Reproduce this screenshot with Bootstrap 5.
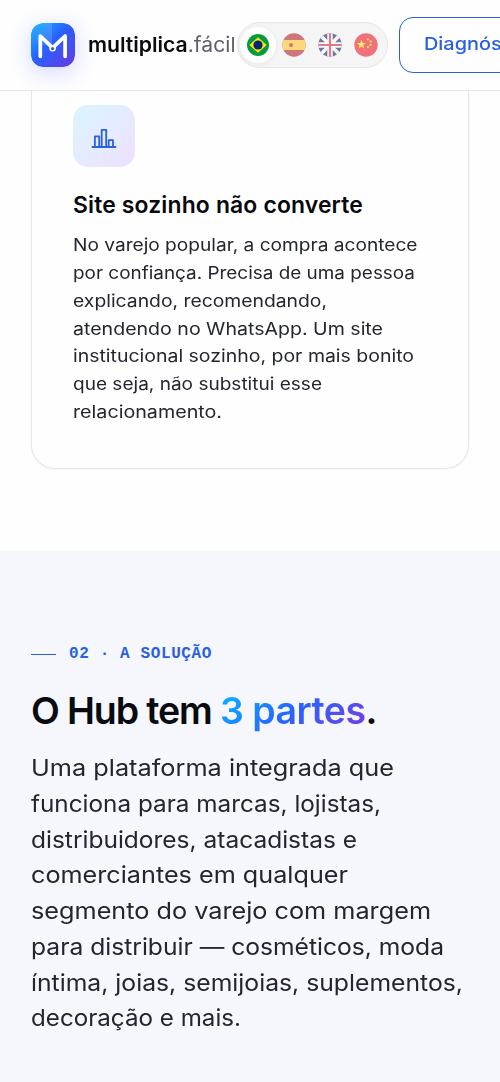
<!DOCTYPE html>
<html lang="pt-BR">
<head>
<meta charset="utf-8">
<meta name="viewport" content="width=device-width, initial-scale=1">
<title>multiplica.fácil</title>
<link href="https://cdn.jsdelivr.net/npm/bootstrap@5.3.0/dist/css/bootstrap.min.css" rel="stylesheet">
<style>
body{font-family:Inter,"Open Sans",sans-serif;color:#23252f;background:#fefefe;overflow:hidden}
.topbar{height:91px;padding-left:31px;border-bottom:1px solid #e6e7eb;background:#fefefe;width:100%;overflow:hidden}
.logo-tile{width:44px;height:44px;border-radius:12px;box-shadow:0 5px 22px rgba(60,90,255,.24)}
.brand-name{font-size:20.4px;font-weight:600;color:#0a0a0f;margin-left:13px;width:149px;line-height:30px}
.brand-name .suffix{font-weight:400;color:#5e5f6d}
.langs{width:151px;height:46px;border:1px solid #e6e6e7;background:#f5f5f6;padding:0 1.5px}
.lang{width:36px;height:36px;opacity:.6}
.lang.active{opacity:1;background:#fff;box-shadow:0 1px 5px rgba(0,0,0,.07)}
.cta{width:180px;height:56px;margin-left:11px;border:1.5px solid #2860e1;border-radius:14px;color:#2860e1;font-size:17.5px;font-weight:500;padding:0 0 1px 24px;text-align:left}
.cta:hover{color:#2860e1}
.problem{padding:0 31px;height:460px}
.reason{height:378px;border:1px solid #e4e6e9;border-top:0;border-radius:0 0 24px 24px;background:#fefefe;padding:14px 41px 0;box-shadow:0 1px 2px rgba(0,0,0,.03)}
.icon-tile{width:62px;height:62px;border-radius:15px;background:linear-gradient(135deg,#d9f4ff,#e5ecff 50%,#eddfff)}
h3{font-size:22.9px;font-weight:600;color:#08090d;line-height:30px;margin:23px 0 11px}
.copy{font-size:17.3px;line-height:27.72px;padding-top:.4px}
.solution{background:#f5f7fc;height:531px;padding:91px 31px 0}
.eyebrow{color:#2860e1;font:bold 16px/24px "Liberation Mono",monospace;gap:13px}
.rule{width:25px;height:1px;background:#2860e1}
h2{font-size:37.5px;font-weight:600;color:#0a0b10;line-height:46px;margin:22px 0 16px}
.grad{background:linear-gradient(135deg,#08b9ff 0%,#2864ff 50%,#793ce0 100%);-webkit-background-clip:text;background-clip:text;color:transparent}
.intro{font-size:22.6px;line-height:35.75px}
.copy>span,.intro>span{display:block}
[data-w]{white-space:nowrap}
.wide [data-w],.wide[data-w]{display:inline-block;transform-origin:0 50%}
</style>
</head>
<body>
<header class="topbar d-flex align-items-center">
  <svg class="logo-tile flex-shrink-0" viewBox="0 0 44 44">
    <defs>
      <linearGradient id="lg" x1="0" y1="0" x2="1" y2="1"><stop offset="0" stop-color="#18b8ff"/><stop offset=".45" stop-color="#2861ff"/><stop offset="1" stop-color="#6b38e0"/></linearGradient>
      <linearGradient id="shine" x1="0" y1="0" x2="1" y2="0"><stop offset="0" stop-color="#fff" stop-opacity="0"/><stop offset="1" stop-color="#fff" stop-opacity=".15"/></linearGradient>
    </defs>
    <rect width="44" height="44" rx="12" fill="url(#lg)"/>
    <path d="M0 12Q0 0 12 0H21V22H0z" fill="url(#shine)"/>
    <path d="M9.3 33.3V13L21.6 24.8 34.1 13V33.3" fill="none" stroke="#fff" stroke-width="3.7" stroke-linecap="round" stroke-linejoin="round"/>
    <circle cx="21.6" cy="25.3" r="3.3" fill="#fff"/><circle cx="21.6" cy="25.6" r="1.6" fill="#2b59f8"/>
  </svg>
  <div class="brand-name wide flex-shrink-0"><span data-w="147.5">multiplica<span class="suffix">.fácil</span></span></div>
  <div class="langs rounded-pill d-flex align-items-center flex-shrink-0">
    <div class="lang active rounded-circle d-flex align-items-center justify-content-center">
      <svg width="22" height="22" viewBox="0 0 22 22"><circle cx="11" cy="11" r="11" fill="#069b3d"/><path d="M11 3.2 19.7 11 11 18.8 2.3 11z" fill="#ffdf15"/><circle cx="11" cy="11" r="4.6" fill="#062672"/></svg>
    </div>
    <div class="lang rounded-circle d-flex align-items-center justify-content-center">
      <svg width="24" height="24" viewBox="0 0 24 24"><clipPath id="c"><circle cx="12" cy="12" r="11.7"/></clipPath><g clip-path="url(#c)"><path fill="#b82227" d="M0 0h24v24H0z"/><path fill="#ffc629" d="M0 7h24v10H0z"/><circle cx="9" cy="12" r="2" fill="#a52b21"/></g></svg>
    </div>
    <div class="lang rounded-circle d-flex align-items-center justify-content-center">
      <svg width="24" height="24" viewBox="0 0 24 24"><g clip-path="url(#c)"><path fill="#17296c" d="M0 0h24v24H0z"/><path d="M0 0 24 24M24 0 0 24" stroke="#fff" stroke-width="3.4"/><path d="M12 0V24M0 12H24" stroke="#fff" stroke-width="5.4"/><path d="M12 0V24M0 12H24" stroke="#d62640" stroke-width="2.2"/></g></svg>
    </div>
    <div class="lang rounded-circle d-flex align-items-center justify-content-center">
      <svg width="24" height="24" viewBox="0 0 24 24"><circle cx="12" cy="12" r="11.7" fill="#ee1c25"/><g fill="#ffe000"><path d="M7.4 6.8 8.5 10.1H12L9.2 12.2 10.3 15.6 7.4 13.5 4.5 15.6 5.6 12.2 2.8 10.1H6.3z"/><circle cx="13.9" cy="6.3" r="1.1"/><circle cx="16.7" cy="8.4" r="1.1"/><circle cx="16.7" cy="11.8" r="1.1"/><circle cx="14" cy="14" r="1.1"/></g></svg>
    </div>
  </div>
  <button class="btn cta wide flex-shrink-0 text-nowrap"><span data-w="113">Diagnóstico</span></button>
</header>
<main>
  <section class="problem">
    <article class="reason">
      <div class="icon-tile d-flex align-items-center justify-content-center">
        <svg width="26" height="24" viewBox="0 0 26 24" fill="none" stroke="#2860e1" stroke-width="1.8" stroke-linejoin="round" stroke-linecap="round"><path d="M1.4 23H24.5M3.9 23V12.3H8.2V23M10.7 23V5.8H15.2V23M17.7 23V16.2H22V23"/></svg>
      </div>
      <h3><span data-w="290">Site sozinho não converte</span></h3>
      <div class="copy wide">
        <span><span data-w="344.5">No varejo popular, a compra acontece</span></span>
        <span><span data-w="342">por confiança. Precisa de uma pessoa</span></span>
        <span><span data-w="254">explicando, recomendando,</span></span>
        <span><span data-w="310">atendendo no WhatsApp. Um site</span></span>
        <span><span data-w="341">institucional sozinho, por mais bonito</span></span>
        <span><span data-w="249">que seja, não substitui esse</span></span>
        <span><span data-w="149">relacionamento.</span></span>
      </div>
    </article>
  </section>
  <section class="solution">
    <div class="eyebrow d-flex align-items-center"><span class="rule"></span><span data-w="143">02 · A SOLUÇÃO</span></div>
    <h2 class="text-nowrap"><span data-w="189">O Hub tem&nbsp;</span><span class="grad" data-w="145.5">3 partes</span>.</h2>
    <div class="intro wide">
      <span><span data-w="363">Uma plataforma integrada que</span></span>
      <span><span data-w="350">funciona para marcas, lojistas,</span></span>
      <span><span data-w="326">distribuidores, atacadistas e</span></span>
      <span><span data-w="317">comerciantes em qualquer</span></span>
      <span><span data-w="400">segmento do varejo com margem</span></span>
      <span><span data-w="413">para distribuir — cosméticos, moda</span></span>
      <span><span data-w="432">íntima, joias, semijoias, suplementos,</span></span>
      <span><span data-w="210">decoração e mais.</span></span>
    </div>
  </section>
</main>
<script src="https://cdn.jsdelivr.net/npm/bootstrap@5.3.0/dist/js/bootstrap.bundle.min.js"></script>
<script>
// Set each line to its measure: body lines take wider letters, headings take tracking.
document.querySelectorAll('[data-w]').forEach(function (el) {
  var target = parseFloat(el.dataset.w), natural = el.getBoundingClientRect().width;
  if (el.closest('.wide')) {
    el.style.transform = 'scaleX(' + target / natural + ')';
  } else {
    el.style.letterSpacing = ((target - natural) / el.textContent.length) + 'px';
  }
});
</script>
</body>
</html>
